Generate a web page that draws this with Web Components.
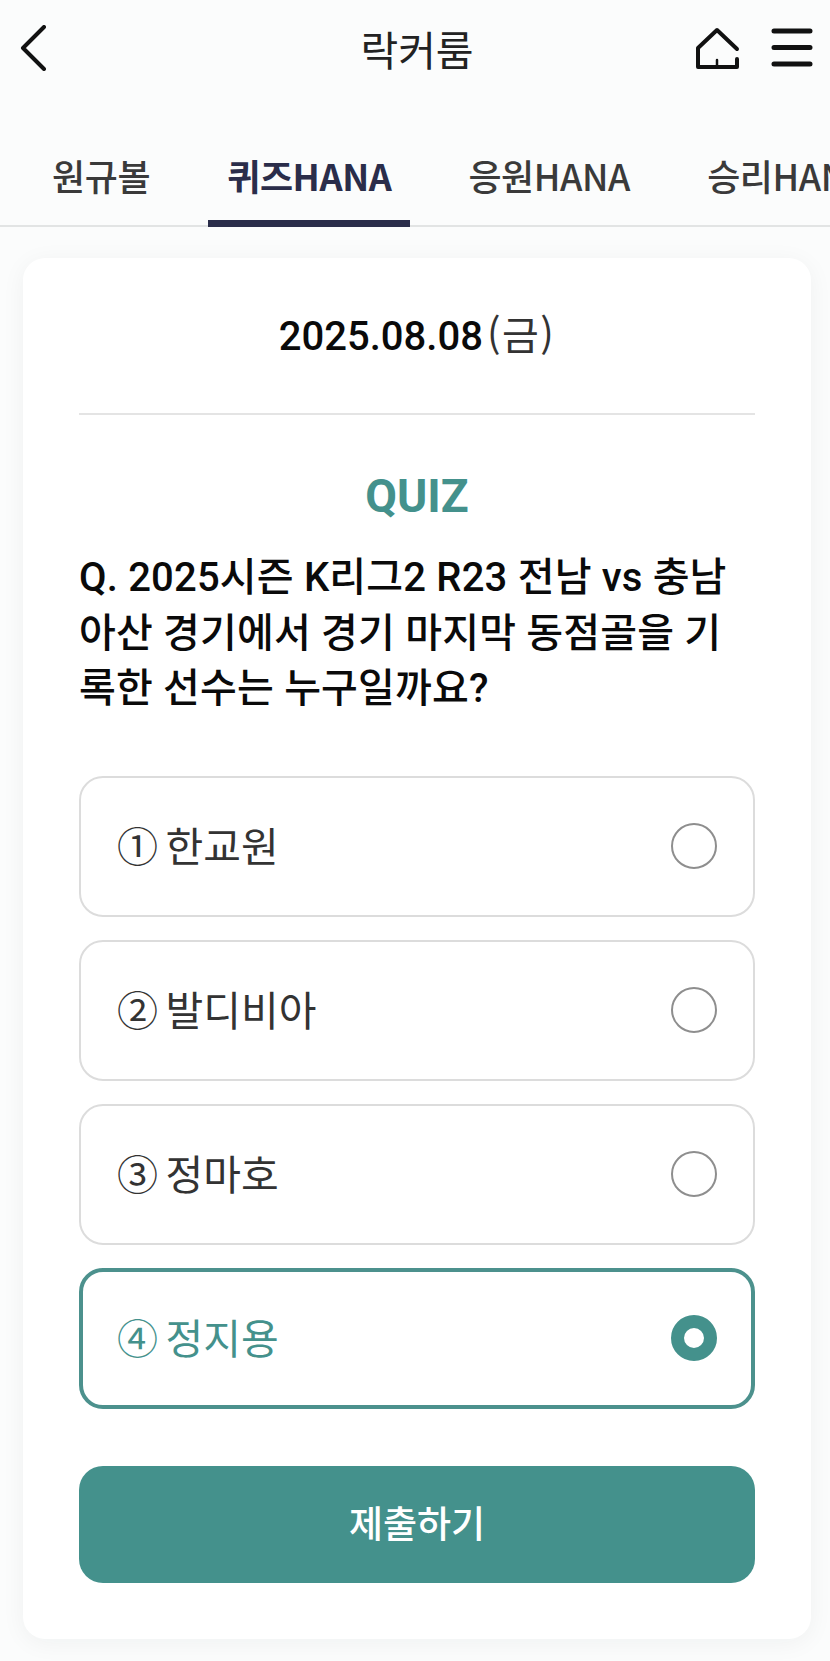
<!DOCTYPE html>
<html lang="ko">
<head>
<meta charset="utf-8">
<title>락커룸</title>
<style>
  html, body { margin: 0; padding: 0; }
  body {
    width: 830px;
    height: 1661px;
    overflow: hidden;
    background: #fbfcfc;
    font-family: "Noto Sans CJK KR", "Noto Sans", sans-serif;
    color: #222;
  }
</style>
</head>
<body>
<locker-header>락커룸</locker-header>
<tab-bar>
  <tab-item>원규볼</tab-item>
  <tab-item active>퀴즈HANA</tab-item>
  <tab-item>응원HANA</tab-item>
  <tab-item>승리HANA</tab-item>
</tab-bar>
<quiz-card>
  <span slot="date">2025.08.08</span>
  <span slot="day">(금)</span>
  <span slot="question">Q. 2025시즌 K리그2 R23 전남 vs 충남<br>아산 경기에서 경기 마지막 동점골을 기<br>록한 선수는 누구일까요?</span>
  <quiz-option>① 한교원</quiz-option>
  <quiz-option>② 발디비아</quiz-option>
  <quiz-option>③ 정마호</quiz-option>
  <quiz-option selected>④ 정지용</quiz-option>
</quiz-card>

<script>
const headerTemplate = document.createElement('template');
headerTemplate.innerHTML = `
  <style>
  :host {
    display: flex;
    align-items: center;
    justify-content: space-between;
    box-sizing: border-box;
    height: 96px;
    padding: 0 17px 0 19px;
  }
  .title {
    flex: 1;
    text-align: center;
    font-size: 41px;
    line-height: 96px;
    color: #222;
    padding-left: 91px;
  }
  .icons { display: flex; gap: 31px; align-items: center; }
  svg { display: block; fill: none; stroke: #111; stroke-linecap: round; stroke-linejoin: round; }
  </style>
  <svg width="30" height="46" viewBox="0 0 30 46" stroke-width="4"><path d="M25 2 L4 23 L25 44"/></svg>
  <div class="title"><slot></slot></div>
  <div class="icons">
    <svg width="46" height="44" viewBox="0 0 46 44" stroke-width="4">
      <path d="M43 23 L23 4 L4 22 V41 H43 V33"/>
      <path d="M23 34 V41" stroke-width="2.5"/>
    </svg>
    <svg width="42" height="44" viewBox="0 0 42 44" stroke-width="5">
      <path d="M3 5 H39 M3 21.5 H39 M3 38 H39"/>
    </svg>
  </div>
`;

class LockerHeader extends HTMLElement {
  constructor() {
    super();
    this._shadowRoot = this.attachShadow({ mode: 'open' });
    this._shadowRoot.appendChild(headerTemplate.content.cloneNode(true));
  }
}

const tabBarTemplate = document.createElement('template');
tabBarTemplate.innerHTML = `
  <style>
  :host {
    display: flex;
    box-sizing: border-box;
    height: 131px;
    padding: 36px 0 0 33px;
    gap: 39px;
    overflow: hidden;
    box-shadow: inset 0 -2px 0 #e2e4e4;
  }
  </style>
  <slot></slot>
`;

class TabBar extends HTMLElement {
  constructor() {
    super();
    this._shadowRoot = this.attachShadow({ mode: 'open' });
    this._shadowRoot.appendChild(tabBarTemplate.content.cloneNode(true));
  }
}

const tabTemplate = document.createElement('template');
tabTemplate.innerHTML = `
  <style>
  :host {
    display: block;
    flex: none;
    box-sizing: border-box;
    height: 95px;
    padding: 0 19px;
    font-size: 36px;
    font-weight: 500;
    line-height: 86px;
    letter-spacing: -0.4px;
    color: #3a3a3a;
    white-space: nowrap;
  }
  :host([active]) {
    font-weight: 700;
    color: #2a2d4a;
    border-bottom: 7px solid #2a2d4a;
  }
  </style>
  <slot></slot>
`;

class TabItem extends HTMLElement {
  constructor() {
    super();
    this._shadowRoot = this.attachShadow({ mode: 'open' });
    this._shadowRoot.appendChild(tabTemplate.content.cloneNode(true));
  }
}

const cardTemplate = document.createElement('template');
cardTemplate.innerHTML = `
  <style>
  :host {
    display: block;
    box-sizing: border-box;
    width: 788px;
    height: 1381px;
    margin: 31px 0 0 23px;
    padding: 0 56px;
    background: #fff;
    border-radius: 22px;
    box-shadow: 0 4px 24px rgba(0, 40, 40, 0.05);
  }
  .date {
    height: 155px;
    line-height: 150px;
    text-align: center;
    font-size: 40px;
    font-weight: 500;
    color: #0a0a0a;
    border-bottom: 2px solid #e4e4e4;
    font-family: Roboto, "Noto Sans CJK KR", sans-serif;
  }
  .day {
    display: inline-block;
    margin-left: 4px;
    font-size: 40px;
    font-weight: 400;
    letter-spacing: 1.5px;
    color: #333;
    font-family: "Noto Sans CJK KR", sans-serif;
  }
  h2 {
    margin: 50px 0 0;
    text-align: center;
    font: 700 46px/62px Roboto, sans-serif;
    color: #44918c;
  }
  .question {
    margin: 23px 0 0;
    font-family: Roboto, "Noto Sans CJK KR", sans-serif;
    font-size: 40px;
    font-weight: 500;
    line-height: 55.5px;
    letter-spacing: 0.18px;
    color: #0a0a0a;
  }
  .options {
    display: flex;
    flex-direction: column;
    gap: 23px;
    margin-top: 59px;
  }
  button {
    display: block;
    width: 100%;
    height: 117px;
    margin-top: 57px;
    padding: 0 0 5px;
    border: none;
    border-radius: 24px;
    background: #44918c;
    color: #fff;
    font: 500 37px "Noto Sans CJK KR", sans-serif;
  }
  </style>
  <div class="date"><slot name="date"></slot><slot name="day" class="day"></slot></div>
  <h2>QUIZ</h2>
  <div class="question"><slot name="question"></slot></div>
  <div class="options"><slot></slot></div>
  <button>제출하기</button>
`;

class QuizCard extends HTMLElement {
  constructor() {
    super();
    this._shadowRoot = this.attachShadow({ mode: 'open' });
    this._shadowRoot.appendChild(cardTemplate.content.cloneNode(true));
  }
}

const optionTemplate = document.createElement('template');
optionTemplate.innerHTML = `
  <style>
  :host {
    display: flex;
    align-items: center;
    justify-content: space-between;
    box-sizing: border-box;
    height: 141px;
    padding: 0 36px;
    border: 2px solid #dcdcdc;
    border-radius: 24px;
    font-size: 41px;
    word-spacing: -4px;
    color: #333;
    background: #fff;
  }
  :host([selected]) {
    border: 4px solid #4c918d;
    padding: 0 34px;
    color: #44918c;
  }
  .label { margin-top: -4px; }
  .radio {
    box-sizing: border-box;
    width: 46px;
    height: 46px;
    border: 2px solid #8e8e8e;
    border-radius: 50%;
    background: #fff;
  }
  :host([selected]) .radio {
    border: 13.5px solid #44918c;
  }
  </style>
  <span class="label"><slot></slot></span>
  <span class="radio"></span>
`;

class QuizOption extends HTMLElement {
  constructor() {
    super();
    this._shadowRoot = this.attachShadow({ mode: 'open' });
    this._shadowRoot.appendChild(optionTemplate.content.cloneNode(true));
  }
}

window.customElements.define('locker-header', LockerHeader);
window.customElements.define('tab-bar', TabBar);
window.customElements.define('tab-item', TabItem);
window.customElements.define('quiz-card', QuizCard);
window.customElements.define('quiz-option', QuizOption);
</script>
</body>
</html>
